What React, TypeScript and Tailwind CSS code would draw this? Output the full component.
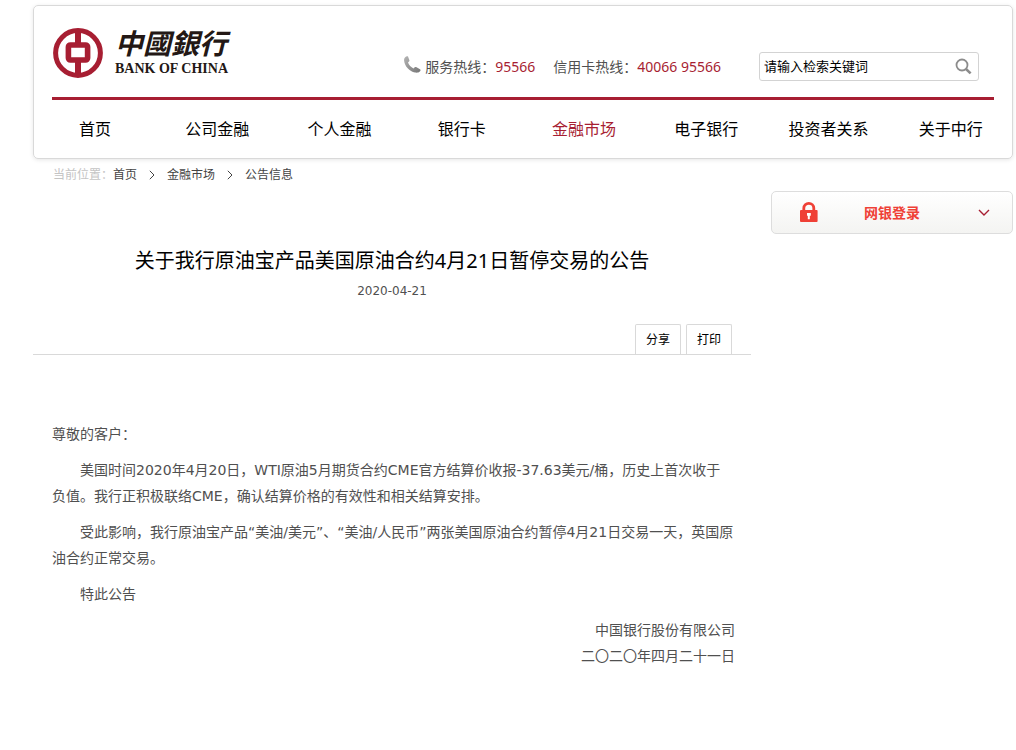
const navItems = [
  "首页",
  "公司金融",
  "个人金融",
  "银行卡",
  "金融市场",
  "电子银行",
  "投资者关系",
  "关于中行",
]

function Logo() {
  return (
    <a href="#" className="flex items-center gap-3">

      <svg width="50" height="50" viewBox="0 0 50 50" fill="none" stroke="#a71e32">
        <circle cx="25" cy="25" r="22.4" strokeWidth="5" />
        <path d="M25 3v13M25 34v13" strokeWidth="6" />
        <rect x="15.4" y="17" width="19.2" height="15" rx="2" strokeWidth="5.6" />
      </svg>

      <span className="flex flex-col text-[#231815]">
        <span className="font-['Noto_Sans_CJK_TC',sans-serif] text-[28px] leading-8 font-bold italic">中國銀行</span>
        <span className="font-['Liberation_Serif',serif] text-[14px] leading-[22px] font-bold">BANK OF CHINA</span>
      </span>

    </a>
  )
}

function PhoneIcon() {
  return (
    <svg width="17" height="17" viewBox="0 0 17 17">
      <defs>
        <linearGradient id="phone" x1="0" y1="0" x2="1" y2="1">
          <stop offset="0" stopColor="#b4b4b4" />
          <stop offset="1" stopColor="#777777" />
        </linearGradient>
      </defs>
      <path
        fill="url(#phone)"
        d="M1.2 1.2C2 .3 3.4 0 4 .6l1.4 3.6c.2.6 0 1-.4 1.4l-1 .9c.8 2.4 3 4.7 5.5 5.9l1.2-1.1c.4-.4.9-.5 1.4-.2l3.9 2.2c.9.6.6 1.5-.2 2.2-1.2 1.2-2.9 1.3-4.800 1C5.6 15.6.7 10.3.1 4.8 0 3.3.2 2.2 1.2 1.2z"
      />
    </svg>
  )
}

function Header() {
  return (
    <header className="rounded-[5px] border border-[#d9d9d9] shadow-[0_1px_4px_rgba(0,0,0,0.1)]">

      <div className="mx-[18px] flex h-[94px] justify-between border-b-3 border-[#a71e32] pr-[15px] pl-px">

        <div className="pt-5">
          <Logo />
        </div>

        {/* Hotline and search */}
        <div className="flex items-start pt-[46px]">

          <p className="flex h-7 items-center text-[14px] text-[#505050]">
            <span className="mr-1 pb-1">
              <PhoneIcon />
            </span>
            <span>服务热线：</span>
            <span className="text-[#a71e32]">95566</span>
            <span className="ml-[18px]">信用卡热线：</span>
            <span className="text-[#a71e32]">40066 95566</span>
          </p>

          <form className="ml-[38px] flex h-[29px] w-[220px] items-center rounded-[3px] border border-[#d3d3d3] pr-1.5 pl-1">
            <input
              type="text"
              aria-label="检索"
              defaultValue="请输入检索关键词"
              className="min-w-0 flex-1 text-[13px] text-black outline-none"
            />
            <button type="button" aria-label="搜索">
              <svg width="17" height="17" viewBox="0 0 17 17" fill="none" stroke="#8c8c8c">
                <circle cx="7" cy="7" r="5.5" strokeWidth="1.8" />
                <path d="M11 11l4.6 4.4" strokeWidth="2.6" />
              </svg>
            </button>
          </form>

        </div>

      </div>

      <nav className="grid h-[58px] grid-cols-8 items-center text-center text-[16px] text-black">
        {navItems.map((item) => (
          <a key={item} href="#" className={item === "金融市场" ? "text-[#a71e32]" : ""}>
            {item}
          </a>
        ))}
      </nav>

    </header>
  )
}

function Crumb() {
  return (
    <svg width="6" height="10" viewBox="0 0 6 10" fill="none" stroke="#444444">
      <path d="M.8 .8L5 5L.8 9.2" />
    </svg>
  )
}

export default function App() {
  return (
    <div className="min-h-screen bg-white pt-[5px] pr-[3px] pl-[33px] font-['Noto_Sans','Noto_Sans_CJK_SC',sans-serif]">

      <Header />

      {/* Breadcrumb */}
      <div className="ml-5 flex h-8 items-center gap-3 text-[12px] text-[#444444]">
        <span>
          <span className="text-[#c4c4c4]">当前位置：</span>
          <a href="#">首页</a>
        </span>
        <Crumb />
        <a href="#">金融市场</a>
        <Crumb />
        <a href="#">公告信息</a>
      </div>

      <div className="flex items-start gap-5">

        <main className="min-w-0 flex-1">

          <h1 className="pt-[55px] text-center text-[20px] leading-[30px] text-black">
            关于我行原油宝产品美国原油合约4月21日暂停交易的公告
          </h1>
          <p className="pt-[3px] text-center font-['DejaVu_Sans',sans-serif] text-[12px] leading-6 text-[#505050]">2020-04-21</p>

          <div className="mt-[21px] flex justify-end gap-[5px] border-b border-[#d9d9d9] pr-[19px]">
            <button className="h-[30px] w-[46px] rounded-t-[2px] border border-b-0 border-[#d9d9d9] text-[12px] text-black">分享</button>
            <button className="h-[30px] w-[46px] rounded-t-[2px] border border-b-0 border-[#d9d9d9] text-[12px] text-black">打印</button>
          </div>

          <article className="flex flex-col gap-2.5 pt-[66px] pr-4 pl-[19px] font-['DejaVu_Sans','Noto_Sans_CJK_SC',sans-serif] text-[14px] leading-[26px] text-[#505050]">
            <p>尊敬的客户：</p>
            <p className="indent-7">
              美国时间2020年4月20日，WTI原油5月期货合约CME官方结算价收报-37.63美元/桶，历史上首次收于
              <br />
              负值。我行正积极联络CME，确认结算价格的有效性和相关结算安排。
            </p>
            <p className="indent-7">
              受此影响，我行原油宝产品“美油/美元”、“美油/人民币”两张美国原油合约暂停4月21日交易一天，英国原油合约正常交易。
            </p>
            <p className="indent-7">特此公告</p>
            <p className="text-right">
              中国银行股份有限公司
              <br />
              二〇二〇年四月二十一日
            </p>
          </article>

        </main>

        <aside className="w-[242px]">
          <button className="grid h-[43px] w-full grid-cols-[1fr_auto_1fr] items-center rounded-[5px] border border-[#dddddd] bg-linear-to-b from-white to-[#f4f4f2] px-[22px] text-[14px] font-bold text-[#ef4036]">
            <svg className="ml-1.5" width="18" height="21" viewBox="0 0 18 21">
              <path d="M3.8 9V6.2a5 4.8 0 0 1 10 0V9" fill="none" stroke="#ef4036" strokeWidth="2.8" />
              <rect x="0" y="8" width="17.6" height="12" rx="1" fill="#ef4036" />
              <path d="M7 11h3.8v2.8h-1v3.4h-2v-3.4H7z" fill="white" />
            </svg>
            <span>网银登录</span>
            <svg className="justify-self-end" width="12" height="8" viewBox="0 0 12 8" fill="none" stroke="#a71e32" strokeWidth="1.4">
              <path d="M1 1l5 5l5-5" />
            </svg>
          </button>
        </aside>

      </div>

    </div>
  )
}
